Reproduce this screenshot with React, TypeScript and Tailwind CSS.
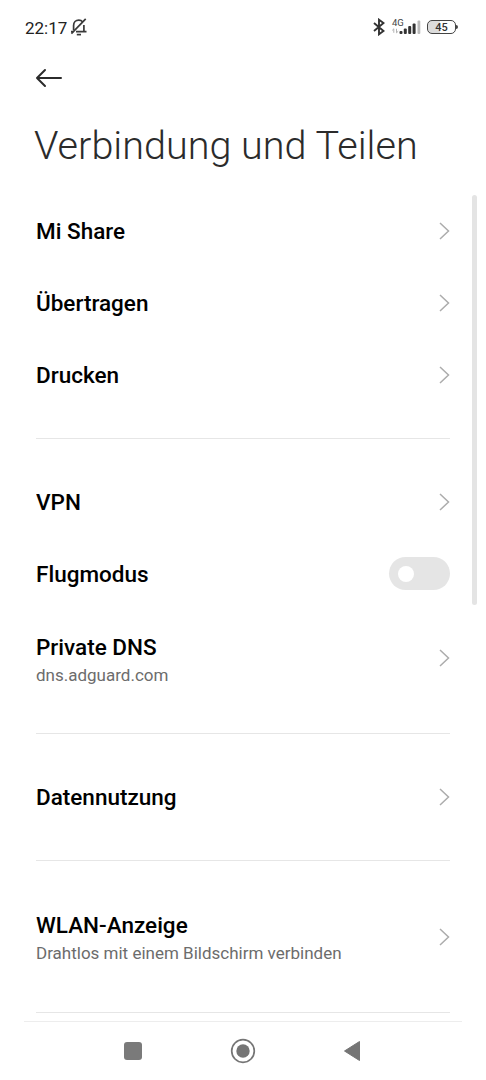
import { Fragment } from "react";

type Item = {
  label: string;
  hint?: string;
  toggle?: boolean;
};

const groups: Item[][] = [
  [{ label: "Mi Share" }, { label: "Übertragen" }, { label: "Drucken" }],
  [
    { label: "VPN" },
    { label: "Flugmodus", toggle: true },
    { label: "Private DNS", hint: "dns.adguard.com" },
  ],
  [{ label: "Datennutzung" }],
  [{ label: "WLAN-Anzeige", hint: "Drahtlos mit einem Bildschirm verbinden" }],
];

function MutedBell() {
  return (
    <svg width="18" height="18" viewBox="0 0 18 18" fill="none" stroke="#3a3a3a" strokeWidth="1.7" className="ml-[2px]">
      <path d="M3.6 12V7.5C3.6 4.4 5.7 2.2 8.8 2.2c1.7 0 3 .7 3.9 1.8M13.9 7v6.3M6 13.7h10.5M1 13.7h2.5" />
      <path d="M15.7 0.8L1.4 15.6" />
      <path d="M6.8 16.6h4.2" />
    </svg>
  );
}

function Bluetooth() {
  return (
    <svg width="12" height="18" viewBox="0 0 12 18" fill="none" stroke="#333" strokeWidth="1.9">
      <path d="M1 5l9.5 8L6 16.3V1.7L10.5 5 1 13" />
    </svg>
  );
}

function Signal() {
  return (
    <div className="relative ml-[7px] h-[18px] w-[29px]">
      <span className="absolute left-0 top-0 text-[9.5px] leading-[9px] text-[#444]">4G</span>
      <svg width="29" height="18" viewBox="0 0 29 18">
        <path d="M1.8 14.8v-4M0.2 12.4l1.6-1.6M4.5 10.8v4M6.2 13.2l-1.7 1.6" stroke="#aaa" strokeWidth="0.9" fill="none" />
        <g fill="#333">
          <rect x="7.5" y="13" width="3" height="3" rx="1" />
          <rect x="11.8" y="10.5" width="3" height="5.5" rx="1" />
          <rect x="16.2" y="8" width="3" height="8" rx="1" />
          <rect x="20.6" y="5.5" width="3" height="10.5" rx="1" />
        </g>
        <rect x="25.5" y="2.5" width="2.8" height="13.5" rx="1" fill="#bbb" />
      </svg>
    </div>
  );
}

function Battery() {
  return (
    <div className="ml-[6px] flex items-center">
      <div className="flex h-[14px] w-[29px] items-center justify-center rounded-[5px] border-[1.5px] border-[#444] bg-linear-to-r from-[#dcdcdc] from-45% to-white to-45% pt-px text-[11px] font-medium leading-none text-[#333]">
        45
      </div>
      <div className="h-1 w-[2px] rounded-r bg-[#444]" />
    </div>
  );
}

function StatusBar() {
  return (
    <div className="flex h-[54px] items-center justify-between pl-[25px] pr-[28px]">
      <div className="flex items-center">
        <span className="w-[43px] pt-px text-[17px] leading-5 text-[#222]">22:17</span>
        <MutedBell />
      </div>
      <div className="flex items-center">
        <Bluetooth />
        <Signal />
        <Battery />
      </div>
    </div>
  );
}

function Chevron() {
  return (
    <svg width="11" height="18" viewBox="0 0 11 18" fill="none" stroke="#acacac" strokeWidth="1.5">
      <path d="M1 1l8.5 8L1 17" />
    </svg>
  );
}

function Toggle() {
  return (
    <div className="mb-px flex h-[33px] w-[61px] items-center rounded-full bg-[#e5e5e5] pl-[9px]">
      <div className="h-4 w-4 rounded-full bg-white" />
    </div>
  );
}

function Row({ item }: { item: Item }) {
  return (
    <div className={`flex items-center justify-between ${item.hint ? "h-[96.4px]" : "h-[72px]"}`}>
      <div className={item.hint ? "pt-[3px]" : ""}>
        <div className="text-[22.5px] leading-[30px] font-medium text-black">{item.label}</div>
        {item.hint && <div className="text-[17px] leading-[26px] text-[#6c6c6c]">{item.hint}</div>}
      </div>
      {item.toggle ? <Toggle /> : <Chevron />}
    </div>
  );
}

function NavBar() {
  return (
    <div className="shrink-0 bg-white">
      <div className="mx-6 h-px bg-[#ededed]" />
      <div className="flex h-[58px] items-center pl-[124px]">
        <div className="h-[18px] w-[18px] rounded-[3px] bg-[#7a7a7a]" />
        <svg width="26" height="26" viewBox="0 0 26 26" className="ml-[88px]">
          <circle cx="13" cy="13" r="11.3" fill="none" stroke="#757575" strokeWidth="1.7" />
          <circle cx="13" cy="13" r="6.7" fill="#757575" />
        </svg>
        <svg width="18" height="22" viewBox="0 0 18 22" className="ml-[87px]">
          <path d="M1.5 11L16.5 1.5v19z" fill="#757575" stroke="#757575" strokeLinejoin="round" />
        </svg>
      </div>
    </div>
  );
}

export default function App() {
  return (
    <div className="flex h-[1080px] w-[486px] flex-col overflow-hidden bg-white font-[Roboto,sans-serif]">
      <StatusBar />
      <header className="h-[141px] shrink-0 pl-[34px]">
        <svg width="30" height="20" viewBox="0 0 30 20" fill="none" stroke="#2b2b2b" strokeWidth="2" strokeLinecap="round" strokeLinejoin="round" className="mt-[14px]">
          <path d="M27 10H3M11 2L3 10l8 8" />
        </svg>
        <h1 className="mt-[33px] text-[39.6px] leading-[50px] font-light text-[#2b2b2b]">Verbindung und Teilen</h1>
      </header>
      <div className="flex min-h-0 flex-1 justify-between">
        <main className="ml-9 w-[414px] overflow-hidden">
          {groups.map((items, i) => (
            <Fragment key={i}>
              {items.map((item) => (
                <Row key={item.label} item={item} />
              ))}
              <div className="my-[27px] h-px bg-[#e6e6e6]" />
            </Fragment>
          ))}
        </main>
        <div className="mr-[9px] h-[410px] w-[5px] rounded-full bg-[#e4e4e4]" />
      </div>
      <NavBar />
    </div>
  );
}
